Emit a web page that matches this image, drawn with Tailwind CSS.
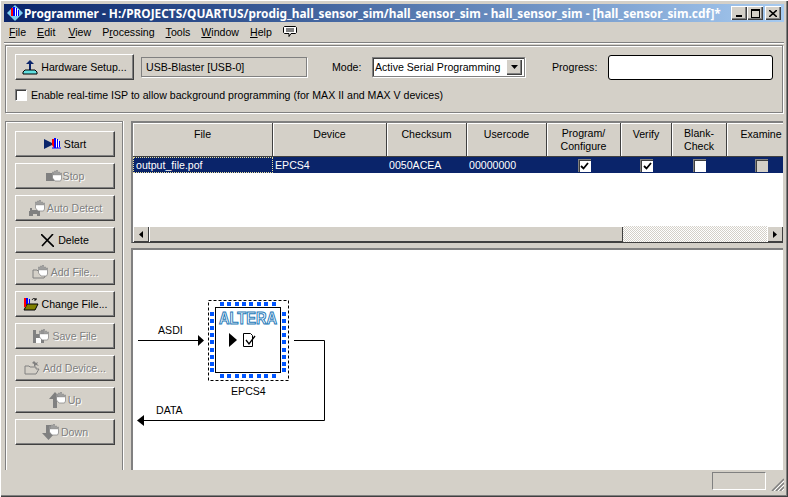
<!DOCTYPE html>
<html lang="en">
<head>
  <meta charset="UTF-8" />
  <title>Programmer</title>
  <script src="https://cdn.jsdelivr.net/npm/@tailwindcss/browser@4"></script>
</head>
<body class="bg-[#d4d0c8]">
<svg class="absolute w-0 h-0">
  <defs>
    <!-- greyed out hand -->
    <g id="hand">
      <path d="M.5 6V2h1v3h1V1h1v4h1V0h1v5h1V2h1v3h1V3h1v6l-1 2H3L.5 8z" fill="#fff" stroke="#808080" stroke-width="0.7"/>
    </g>
    <g id="handColor">
      <path d="M0 5V1h2v9L0 7z" fill="#f00"/>
      <path d="M2 0h2v10H2zM5 1h1v9H5zM7 3h1v6H7z" fill="#00f"/>
      <path d="M4 1h1v9H4zM6 2h1v8H6z" fill="#fff"/>
      <path d="M0 10h9" stroke="#00f"/>
    </g>
  </defs>
</svg>

<div class="w-[788px] h-[497px] overflow-hidden bg-[#d4d0c8] p-1 flex flex-col font-['Liberation_Sans',sans-serif] text-[10.6px] leading-[14px] text-black shadow-[inset_1px_1px_0_#fff,inset_-1px_-1px_0_#404040,inset_-2px_-2px_0_#808080]">

  <!-- title bar -->
  <div class="h-[18px] shrink-0 flex items-center bg-gradient-to-r from-[#0a246a] to-[#a6caf0] text-white font-['Noto_Sans',sans-serif] font-bold text-[11.85px] pl-[3px] pr-[3px]">
    <svg class="w-4 h-4 mr-[1px] shrink-0" viewBox="0 0 16 16">
      <path d="M8 0l8 8-8 8-8-8z" fill="#7fd0f0"/>
      <path d="M4 3h2v8H4z" fill="#f00"/><path d="M6 2h2v9H6zM9 3h1v8H9zM11 5h1v6h-1z" fill="#00f"/><path d="M8 3h1v8H8zM10 4h1v7h-1z" fill="#fff"/>
    </svg>
    <span class="flex-1 min-w-0 whitespace-nowrap">Programmer - H:/PROJECTS/QUARTUS/prodig_hall_sensor_sim/hall_sensor_sim - hall_sensor_sim - [hall_sensor_sim.cdf]*</span>
    <div class="flex items-center shrink-0">
      <div class="w-4 h-[14px] bg-[#d4d0c8] shadow-[inset_1px_1px_0_#fff,inset_-1px_-1px_0_#404040,inset_-2px_-2px_0_#808080] flex items-end justify-center pb-[3px]"><div class="w-[6px] h-[2px] bg-black"></div></div>
      <div class="w-4 h-[14px] bg-[#d4d0c8] shadow-[inset_1px_1px_0_#fff,inset_-1px_-1px_0_#404040,inset_-2px_-2px_0_#808080] flex items-center justify-center"><div class="w-[9px] h-[9px] border border-black border-t-2"></div></div>
      <div class="w-4 h-[14px] ml-[2px] bg-[#d4d0c8] shadow-[inset_1px_1px_0_#fff,inset_-1px_-1px_0_#404040,inset_-2px_-2px_0_#808080] flex items-center justify-center">
        <svg class="w-2 h-[7px]" viewBox="0 0 8 7"><path d="M0 0l8 7M8 0L0 7" stroke="#000" stroke-width="1.6"/></svg>
      </div>
    </div>
  </div>

  <!-- menu bar -->
  <div class="h-[21px] shrink-0 flex items-center pl-[5px] gap-[11px] border-b border-[#808080] shadow-[0_1px_0_#fff]">
    <span><u>F</u>ile</span>
    <span><u>E</u>dit</span>
    <span class="ml-[2px]"><u>V</u>iew</span>
    <span>P<u>r</u>ocessing</span>
    <span><u>T</u>ools</span>
    <span><u>W</u>indow</span>
    <span><u>H</u>elp</span>
    <svg class="w-[14px] h-[13px]" viewBox="0 0 14 13"><path d="M1.5.5h11l1 1v5l-1 1H8l-2 3v-3H1.5l-1-1v-5z" fill="#fff" stroke="#000"/><path d="M3 3h8M3 5h8" stroke="#000"/></svg>
  </div>

  <!-- hardware group -->
  <div class="h-[68px] shrink-0 mt-[2px] ml-[1px] mr-[1px] border border-[#808080] shadow-[inset_1px_1px_0_#fff,1px_1px_0_#fff] pl-[9px] pt-[8px] pr-[8px]">
    <div class="flex items-center h-[26px]">
      <button class="w-[119px] h-[26px] flex items-center justify-center gap-[3px] bg-[#d4d0c8] border-t border-l border-white border-r border-b border-r-[#404040] border-b-[#404040] shadow-[inset_-1px_-1px_0_#808080]">
        <svg class="w-4 h-[15px]" viewBox="0 0 16 15"><path d="M8 0l4 4h-3v6H7V4H4z" fill="#0a246a"/><path d="M1 12l2-2h10l2 2v2H1z" fill="#60e0e0" stroke="#000"/></svg>
        Hardware Setup...
      </button>
      <div class="ml-[7px] w-[166px] h-[20px] border border-[#808080] shadow-[1px_1px_0_#fff] flex items-center pl-1 text-[#000]">USB-Blaster [USB-0]</div>
      <span class="ml-[25px] w-[40px]">Mode:</span>
      <div class="w-[153px] h-[20px] bg-white border border-[#808080] shadow-[inset_1px_1px_0_#404040,1px_1px_0_#fff] flex items-center pl-[2px] pr-[2px]">
        <span class="flex-1 whitespace-nowrap">Active Serial Programming</span>
        <div class="w-4 h-4 bg-[#d4d0c8] shadow-[inset_1px_1px_0_#fff,inset_-1px_-1px_0_#404040,inset_-2px_-2px_0_#808080] flex items-center justify-center">
          <svg class="w-[7px] h-1" viewBox="0 0 7 4"><path d="M0 0h7L3.500 4z"/></svg>
        </div>
      </div>
      <span class="ml-[27px] w-[56px]">Progress:</span>
      <div class="w-[165px] h-[25px] bg-white border border-black rounded-[3px]"></div>
    </div>
    <div class="flex items-center mt-[8px] gap-[4px]">
      <div class="w-[12px] h-[12px] bg-white border-t border-l border-[#808080] border-r border-b border-r-white border-b-white shadow-[inset_1px_1px_0_#404040]"></div>
      <span class="whitespace-nowrap">Enable real-time ISP to allow background programming (for MAX II and MAX V devices)</span>
    </div>
  </div>

  <!-- main area -->
  <div class="flex-1 min-h-0 flex mt-[6px] ml-[1px] mr-[1px]">
    <!-- left buttons -->
    <div class="w-[118px] shrink-0 h-[349px] mt-[2px] border-t border-l border-r border-[#808080] shadow-[inset_1px_1px_0_#fff,1px_0_0_#fff] pl-[9px] pt-[9px] flex flex-col gap-[6px]">
      <button class="w-[100px] h-[26px] flex items-center justify-center gap-[2px] bg-[#d4d0c8] border-t border-l border-white border-r border-b border-r-[#404040] border-b-[#404040] shadow-[inset_-1px_-1px_0_#808080]">
        <svg class="w-[18px] h-[14px]" viewBox="0 0 18 14"><path d="M0 2l10 5L0 12z" fill="#0a246a"/><use href="#handColor" x="8" y="1"/></svg>Start
      </button>
      <button class="w-[100px] h-[26px] flex items-center justify-center gap-[1px] bg-[#d4d0c8] text-[#808080] [text-shadow:1px_1px_0_#fff] border-t border-l border-white border-r border-b border-r-[#404040] border-b-[#404040] shadow-[inset_-1px_-1px_0_#808080]">
        <svg class="w-4 h-[12px]" viewBox="0 0 16 12"><rect y="3" width="8" height="8" fill="#808080"/><use href="#hand" x="6" y="0"/></svg>Stop
      </button>
      <button class="w-[100px] h-[26px] flex items-center justify-center gap-[1px] bg-[#d4d0c8] text-[#808080] [text-shadow:1px_1px_0_#fff] border-t border-l border-white border-r border-b border-r-[#404040] border-b-[#404040] shadow-[inset_-1px_-1px_0_#808080]">
        <svg class="w-[18px] h-[17px]" viewBox="0 0 18 17"><path d="M1 11h1V8h2v2h5V8h2v3h1v5h-3v-2H5v2H1z" fill="#808080"/><use href="#hand" x="7" y="0"/></svg>Auto Detect
      </button>
      <button class="w-[100px] h-[26px] flex items-center justify-center gap-[4px] bg-[#d4d0c8] border-t border-l border-white border-r border-b border-r-[#404040] border-b-[#404040] shadow-[inset_-1px_-1px_0_#808080]">
        <svg class="w-[13px] h-[13px]" viewBox="0 0 13 13"><path d="M0 0l13 13M12 0L1 12" stroke="#000" stroke-width="1.600"/></svg>Delete
      </button>
      <button class="w-[100px] h-[26px] flex items-center justify-center gap-[3px] bg-[#d4d0c8] text-[#808080] [text-shadow:1px_1px_0_#fff] border-t border-l border-white border-r border-b border-r-[#404040] border-b-[#404040] shadow-[inset_-1px_-1px_0_#808080]">
        <svg class="w-[16px] h-[14px]" viewBox="0 0 16 14"><path d="M1 5h4l1 1h6v2h3l-3 5H1z" fill="#d4d0c8" stroke="#808080"/><use href="#hand" x="6" y="0"/></svg>Add File...
      </button>
      <button class="w-[100px] h-[26px] flex items-center justify-center gap-[3px] bg-[#d4d0c8] border-t border-l border-white border-r border-b border-r-[#404040] border-b-[#404040] shadow-[inset_-1px_-1px_0_#808080]">
        <svg class="w-[16px] h-[14px]" viewBox="0 0 16 14"><path d="M1 13L4 7h11l-3 6z" fill="#808000" stroke="#000"/><path d="M1 1h2v9H1z" fill="#f00"/><path d="M3 1h2v6H3zM6 2h1v5H6z" fill="#00f"/><path d="M9 3c1-2 3-2 4 0M13 1v2h-2" fill="none" stroke="#000"/></svg>Change File...
      </button>
      <button class="w-[100px] h-[26px] flex items-center justify-center gap-[3px] bg-[#d4d0c8] text-[#808080] [text-shadow:1px_1px_0_#fff] border-t border-l border-white border-r border-b border-r-[#404040] border-b-[#404040] shadow-[inset_-1px_-1px_0_#808080]">
        <svg class="w-[16px] h-[15px]" viewBox="0 0 16 15"><path d="M0 1h11v13H0z" fill="#808080"/><path d="M3 1h5v4H3z" fill="#d4d0c8"/><path d="M3 9h5v5H3z" fill="#fff"/><use href="#hand" x="6" y="0"/></svg>Save File
      </button>
      <button class="w-[100px] h-[26px] flex items-center justify-center gap-[3px] bg-[#d4d0c8] text-[#808080] [text-shadow:1px_1px_0_#fff] border-t border-l border-white border-r border-b border-r-[#404040] border-b-[#404040] shadow-[inset_-1px_-1px_0_#808080]">
        <svg class="w-[16px] h-[14px]" viewBox="0 0 16 14"><path d="M1 5h4l1 1h6v2h3l-3 5H1z" fill="#d4d0c8" stroke="#808080"/><path d="M10 0l2 2 2-1-1 2 2 2-3-1-2 2v-3L8 2z" fill="#808080"/></svg>Add Device...
      </button>
      <button class="w-[100px] h-[26px] flex items-center justify-center gap-[2px] bg-[#d4d0c8] text-[#808080] [text-shadow:1px_1px_0_#fff] border-t border-l border-white border-r border-b border-r-[#404040] border-b-[#404040] shadow-[inset_-1px_-1px_0_#808080]">
        <svg class="w-[17px] h-[16px]" viewBox="0 0 17 16"><path d="M6 0l6 7H8v9H4V7H0z" fill="#808080"/><use href="#hand" x="7" y="0"/></svg>Up
      </button>
      <button class="w-[100px] h-[26px] flex items-center justify-center gap-[2px] bg-[#d4d0c8] text-[#808080] [text-shadow:1px_1px_0_#fff] border-t border-l border-white border-r border-b border-r-[#404040] border-b-[#404040] shadow-[inset_-1px_-1px_0_#808080]">
        <svg class="w-[17px] h-[16px]" viewBox="0 0 17 16"><path d="M4 1h5v8h4l-6.500 7L0 9h4z" fill="#808080"/><use href="#hand" x="7" y="0"/></svg>Down
      </button>
    </div>

    <!-- right side -->
    <div class="ml-[8px] flex-1 min-w-0 flex flex-col">
      <!-- table -->
      <div class="h-[122px] mt-[2px] shrink-0 border-t-2 border-l-2 border-[#808080] border-b border-b-[#404040] flex flex-col overflow-hidden">
        <div class="h-[34px] shrink-0 flex text-center">
          <div class="w-[140px] shrink-0 pt-[4px] bg-[#d4d0c8] border-r border-r-[#404040] border-b border-b-[#404040] shadow-[inset_1px_1px_0_#fff]">File</div>
          <div class="w-[114px] shrink-0 pt-[4px] bg-[#d4d0c8] border-r border-r-[#404040] border-b border-b-[#404040] shadow-[inset_1px_1px_0_#fff]">Device</div>
          <div class="w-[80px] shrink-0 pt-[4px] bg-[#d4d0c8] border-r border-r-[#404040] border-b border-b-[#404040] shadow-[inset_1px_1px_0_#fff]">Checksum</div>
          <div class="w-[80px] shrink-0 pt-[4px] bg-[#d4d0c8] border-r border-r-[#404040] border-b border-b-[#404040] shadow-[inset_1px_1px_0_#fff]">Usercode</div>
          <div class="w-[74px] shrink-0 pt-[4px] leading-[13px] bg-[#d4d0c8] border-r border-r-[#404040] border-b border-b-[#404040] shadow-[inset_1px_1px_0_#fff]">Program/<br>Configure</div>
          <div class="w-[51px] shrink-0 pt-[4px] bg-[#d4d0c8] border-r border-r-[#404040] border-b border-b-[#404040] shadow-[inset_1px_1px_0_#fff]">Verify</div>
          <div class="w-[55px] shrink-0 pt-[4px] leading-[13px] bg-[#d4d0c8] border-r border-r-[#404040] border-b border-b-[#404040] shadow-[inset_1px_1px_0_#fff]">Blank-<br>Check</div>
          <div class="w-[68px] shrink-0 pt-[4px] whitespace-nowrap bg-[#d4d0c8] border-b border-b-[#404040] shadow-[inset_1px_1px_0_#fff]">Examine</div>
        </div>
        <div class="flex-1 min-h-0 bg-white">
          <div class="h-[16px] flex items-center bg-[#0a246a] text-white">
            <div class="w-[140px] shrink-0 h-full pl-[2px] flex items-center border border-dotted border-[#e8e0a0]">output_file.pof</div>
            <div class="w-[114px] shrink-0 pl-[2px]">EPCS4</div>
            <div class="w-[80px] shrink-0 pl-[2px]">0050ACEA</div>
            <div class="w-[80px] shrink-0 pl-[2px]">00000000</div>
            <div class="w-[74px] shrink-0 flex justify-center">
              <div class="w-[13px] h-[13px] bg-white border-t border-l border-[#808080] shadow-[inset_1px_1px_0_#404040] flex items-center justify-center"><svg class="w-[9px] h-[8px]" viewBox="0 0 9 8"><path d="M1 4l2.500 2.500L8 1" fill="none" stroke="#000" stroke-width="1.800"/></svg></div>
            </div>
            <div class="w-[51px] shrink-0 flex justify-center">
              <div class="w-[13px] h-[13px] bg-white border-t border-l border-[#808080] shadow-[inset_1px_1px_0_#404040] flex items-center justify-center"><svg class="w-[9px] h-[8px]" viewBox="0 0 9 8"><path d="M1 4l2.500 2.500L8 1" fill="none" stroke="#000" stroke-width="1.800"/></svg></div>
            </div>
            <div class="w-[55px] shrink-0 flex justify-center">
              <div class="w-[13px] h-[13px] bg-white border-t border-l border-[#808080] shadow-[inset_1px_1px_0_#404040]"></div>
            </div>
            <div class="w-[68px] shrink-0 flex justify-center">
              <div class="w-[13px] h-[13px] bg-[#d4d0c8] border-t border-l border-[#808080] shadow-[inset_1px_1px_0_#404040]"></div>
            </div>
          </div>
        </div>
        <!-- scrollbar -->
        <div class="h-[16px] shrink-0 flex bg-[repeating-conic-gradient(#d4d0c8_0_25%,#fff_0_50%)] bg-[length:2px_2px]">
          <div class="w-[16px] h-full bg-[#d4d0c8] shadow-[inset_1px_1px_0_#fff,inset_-1px_-1px_0_#404040] flex items-center justify-center"><svg class="w-1 h-[7px]" viewBox="0 0 4 7"><path d="M4 0v7L0 3.500z"/></svg></div>
          <div class="w-[474px] h-full bg-[#d4d0c8] shadow-[inset_1px_1px_0_#fff,inset_-1px_-1px_0_#404040]"></div>
          <div class="flex-1"></div>
          <div class="w-[16px] h-full bg-[#d4d0c8] shadow-[inset_1px_1px_0_#fff,inset_-1px_-1px_0_#404040] flex items-center justify-center"><svg class="w-1 h-[7px]" viewBox="0 0 4 7"><path d="M0 0v7l4-3.500z"/></svg></div>
        </div>
      </div>

      <!-- chain diagram -->
      <div class="mt-[5px] h-[222px] shrink-0 border-t-2 border-l-2 border-[#808080] bg-white">
        <svg class="w-[648px] h-[220px] block" viewBox="133 250 648 220">
          <g font-family="Liberation Sans" font-size="10.6" fill="#000">
            <text x="158" y="334">ASDI</text>
            <text x="156" y="414">DATA</text>
            <text x="231" y="395">EPCS4</text>
          </g>
          <path d="M138 340.500h62" stroke="#000"/>
          <path d="M198 335l6 5.500-6 5.500z" fill="#000"/>
          <path d="M294 340.500h30.500v80H143" fill="none" stroke="#000"/>
          <path d="M144 415l-7 5.500 7 5.500z" fill="#000"/>
          <rect x="208.500" y="300.500" width="80" height="80" fill="none" stroke="#000" stroke-dasharray="3 2"/>
          <rect x="215.500" y="307.500" width="65" height="65" fill="#fff" stroke="#000"/>
          <path d="M220 304h4M227 304h4M235 304h4M242 304h4M249 304h4M257 304h4M264 304h4M272 304h4M220 376h4M227 376h4M235 376h4M242 376h4M249 376h4M257 376h4M264 376h4M272 376h4" stroke="#0055ff" stroke-width="4"/>
          <path d="M212 312v4M212 319v4M212 326v4M212 333v4M212 340v4M212 348v4M212 355v4M212 362v4M212 368v4M284 312v4M284 319v4M284 326v4M284 333v4M284 340v4M284 348v4M284 355v4M284 362v4M284 368v4" stroke="#0055ff" stroke-width="4"/>
          <text x="219" y="324" font-family="Liberation Sans" font-weight="700" font-size="16" fill="#fff" stroke="#1a78b8" stroke-width="1" textLength="58" lengthAdjust="spacingAndGlyphs">ALTERA</text>
          <path d="M229 333l8 7-8 7z" fill="#000"/>
          <path d="M243.500 333.500h7l2 2v11h-9z" fill="#fff" stroke="#000"/>
          <path d="M246 340l3 4 6-8" fill="none" stroke="#000" stroke-width="1.300"/>
        </svg>
      </div>
    </div>
  </div>

  <!-- status bar -->
  <div class="h-[23px] shrink-0 flex items-start justify-end pt-[2px] pr-[18px] relative">
    <div class="w-[54px] h-[18px] border-t border-l border-[#808080] border-r border-b border-r-white border-b-white"></div>
    <svg class="absolute right-0 bottom-[2px] w-[13px] h-[13px]" viewBox="0 0 13 13"><path d="M1 13L13 1M5 13l8-8M9 13l4-4" stroke="#808080" stroke-width="1.500"/><path d="M3 13L13 3M7 13l6-6M11 13l2-2" stroke="#fff"/></svg>
  </div>
</div>
</body>
</html>
